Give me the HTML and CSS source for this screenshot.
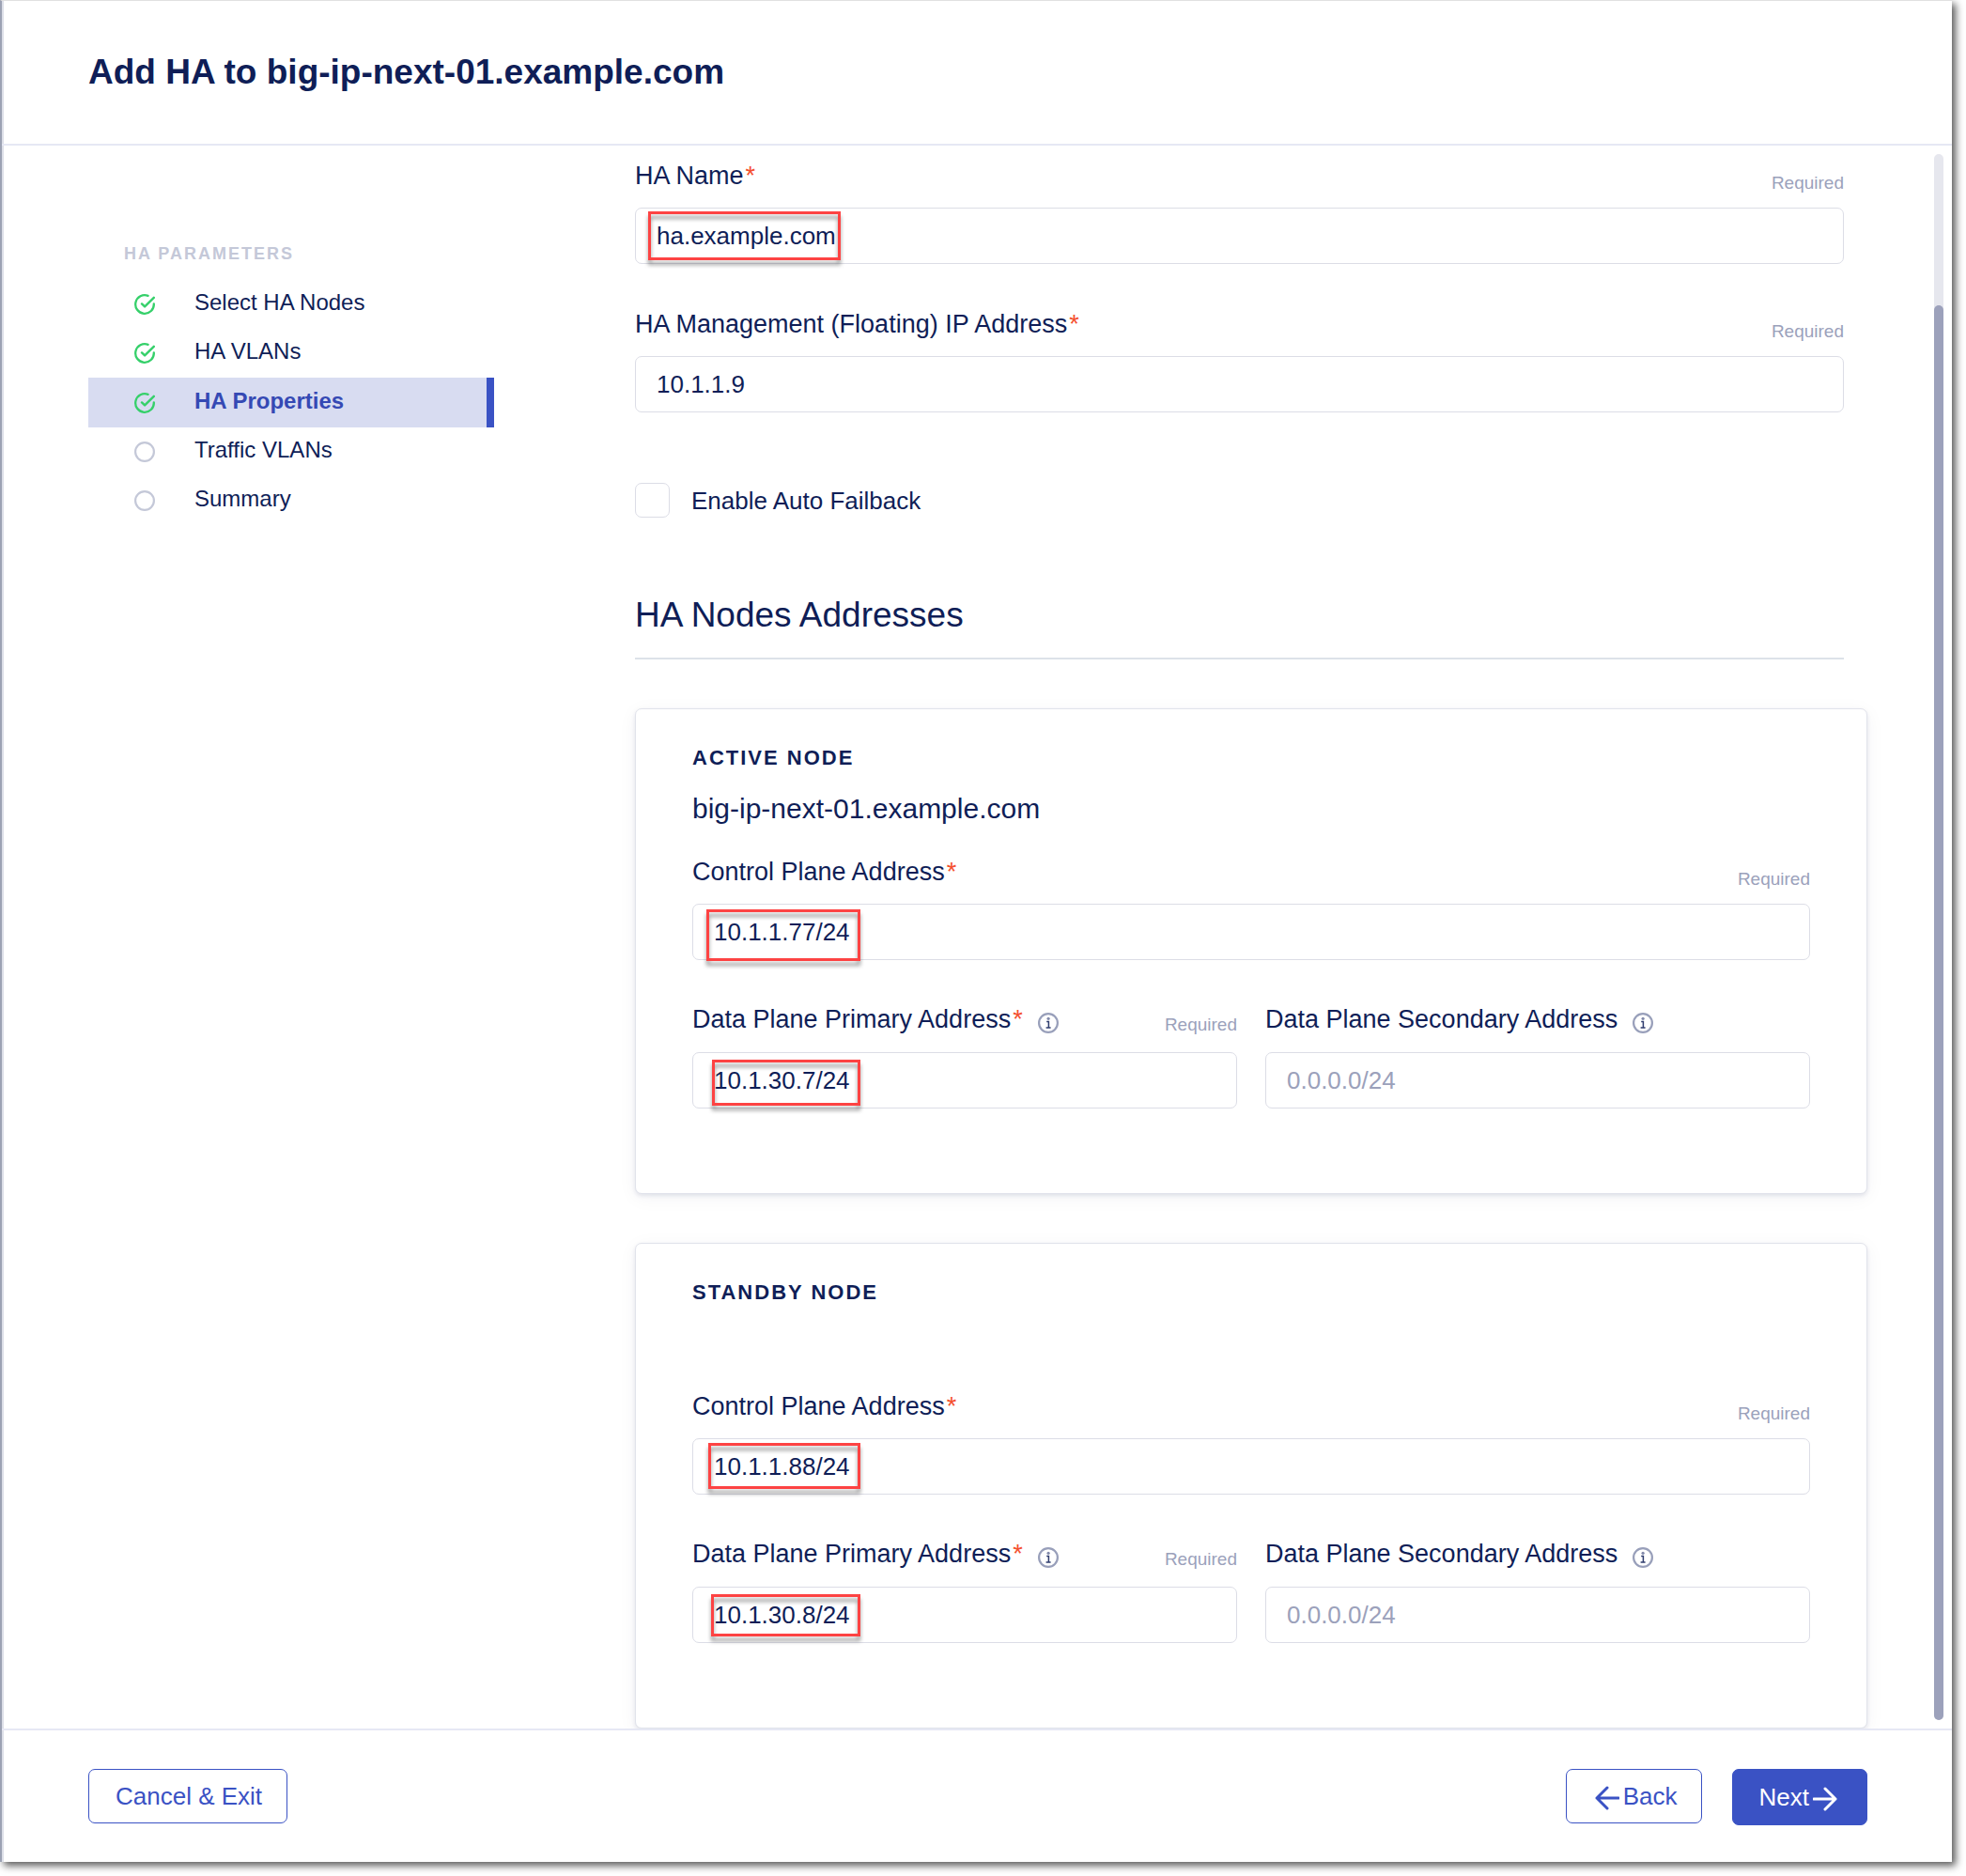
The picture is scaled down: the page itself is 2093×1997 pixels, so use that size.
FILE: index.html
```html
<!DOCTYPE html>
<html lang="en">
<head>
<meta charset="utf-8">
<meta name="viewport" content="width=device-width, initial-scale=1">
<title>Add HA to big-ip-next-01.example.com</title>
<link rel="stylesheet" href="styles.css">
</head>
<body>
<svg class="sprite" aria-hidden="true">
  <symbol id="icon-done" viewBox="0 0 22 22">
    <path d="M14.6 1.9A9.8 9.8 0 1 0 20.8 10.4" fill="none" stroke="currentColor" stroke-width="2.3" stroke-linecap="round"/>
    <path d="M8 10.4l3.1 3L20.8 3.8" fill="none" stroke="currentColor" stroke-width="2.4" stroke-linecap="round" stroke-linejoin="round"/>
  </symbol>
  <symbol id="icon-todo" viewBox="0 0 22 22">
    <circle cx="11" cy="11" r="9.9" fill="none" stroke="currentColor" stroke-width="2.2"/>
  </symbol>
  <symbol id="icon-info" viewBox="0 0 22 22">
    <circle cx="11" cy="11" r="9.9" fill="none" stroke="#989fba" stroke-width="2.2"/>
    <circle cx="11.1" cy="6.3" r="1.6" fill="#8189aa"/>
    <path d="M9.2 9.6h2.2v6.3M8.6 16h5" fill="none" stroke="#2f3c6e" stroke-width="1.5"/>
  </symbol>
</svg>

<div class="window">
  <header class="window-header">
    <h1>Add HA to big-ip-next-01.example.com</h1>
  </header>

  <div class="window-body">
    <nav class="steps" aria-label="HA parameters">
      <h2 class="steps-title">HA PARAMETERS</h2>
      <ol>
        <li><a class="step" href="#nodes"><svg class="step-icon done"><use href="#icon-done"/></svg>Select HA Nodes</a></li>
        <li><a class="step" href="#ha-vlans"><svg class="step-icon done"><use href="#icon-done"/></svg>HA VLANs</a></li>
        <li><a class="step current" href="#properties" aria-current="step"><svg class="step-icon done"><use href="#icon-done"/></svg>HA Properties</a></li>
        <li><a class="step" href="#traffic"><svg class="step-icon"><use href="#icon-todo"/></svg>Traffic VLANs</a></li>
        <li><a class="step" href="#summary"><svg class="step-icon"><use href="#icon-todo"/></svg>Summary</a></li>
      </ol>
    </nav>

    <main class="content">
      <form id="ha-form">
        <div class="general">
          <div class="field">
            <div class="field-head">
              <label for="ha-name">HA Name<span class="star">*</span></label>
              <span class="required">Required</span>
            </div>
            <div class="control">
              <input type="text" id="ha-name" value="ha.example.com">
              <span class="mark mark-name"></span>
            </div>
          </div>
          <div class="field">
            <div class="field-head">
              <label for="ha-ip">HA Management (Floating) IP Address<span class="star">*</span></label>
              <span class="required">Required</span>
            </div>
            <div class="control">
              <input type="text" id="ha-ip" value="10.1.1.9">
            </div>
          </div>
          <div class="check">
            <input type="checkbox" id="failback">
            <label for="failback">Enable Auto Failback</label>
          </div>
          <h2 class="section-title">HA Nodes Addresses</h2>
        </div>

        <section class="card">
          <h3>ACTIVE NODE</h3>
          <p class="node-name">big-ip-next-01.example.com</p>
          <div class="field">
            <div class="field-head">
              <label for="active-control">Control Plane Address<span class="star">*</span></label>
              <span class="required">Required</span>
            </div>
            <div class="control">
              <input type="text" id="active-control" value="10.1.1.77/24">
              <span class="mark mark-active-control"></span>
            </div>
          </div>
          <div class="pair">
            <div class="field">
              <div class="field-head with-info">
                <label for="active-primary">Data Plane Primary Address<span class="star">*</span></label>
                <button type="button" class="info" aria-label="About the primary address"><svg><use href="#icon-info"/></svg></button>
                <span class="required">Required</span>
              </div>
              <div class="control">
                <input type="text" id="active-primary" value="10.1.30.7/24">
                <span class="mark mark-active-primary"></span>
              </div>
            </div>
            <div class="field">
              <div class="field-head with-info">
                <label for="active-secondary">Data Plane Secondary Address</label>
                <button type="button" class="info" aria-label="About the secondary address"><svg><use href="#icon-info"/></svg></button>
              </div>
              <div class="control">
                <input type="text" id="active-secondary" placeholder="0.0.0.0/24">
              </div>
            </div>
          </div>
        </section>

        <section class="card">
          <h3>STANDBY NODE</h3>
          <p class="node-name"></p>
          <div class="field">
            <div class="field-head">
              <label for="standby-control">Control Plane Address<span class="star">*</span></label>
              <span class="required">Required</span>
            </div>
            <div class="control">
              <input type="text" id="standby-control" value="10.1.1.88/24">
              <span class="mark mark-standby-control"></span>
            </div>
          </div>
          <div class="pair">
            <div class="field">
              <div class="field-head with-info">
                <label for="standby-primary">Data Plane Primary Address<span class="star">*</span></label>
                <button type="button" class="info" aria-label="About the primary address"><svg><use href="#icon-info"/></svg></button>
                <span class="required">Required</span>
              </div>
              <div class="control">
                <input type="text" id="standby-primary" value="10.1.30.8/24">
                <span class="mark mark-standby-primary"></span>
              </div>
            </div>
            <div class="field">
              <div class="field-head with-info">
                <label for="standby-secondary">Data Plane Secondary Address</label>
                <button type="button" class="info" aria-label="About the secondary address"><svg><use href="#icon-info"/></svg></button>
              </div>
              <div class="control">
                <input type="text" id="standby-secondary" placeholder="0.0.0.0/24">
              </div>
            </div>
          </div>
        </section>
      </form>
    </main>

    <div class="scroll-track"><div class="scroll-thumb"></div></div>
  </div>

  <footer class="window-footer">
    <button type="button" class="btn cancel">Cancel &amp; Exit</button>
    <button type="button" class="btn back"><svg class="arrow" viewBox="0 0 26 26"><path d="M25 13H2M13 2L2 13l11 11"/></svg>Back</button>
    <button type="submit" form="ha-form" class="btn primary">Next<svg class="arrow" viewBox="0 0 26 26"><path d="M1 13h23M13 2l11 11-11 11"/></svg></button>
  </footer>
</div>
</body>
</html>
```

FILE: styles.css
```css
:root {
  --ink: #0f1e57;
  --blue: #3a52c4;
  --muted: #9ba1bb;
  --line: #dcdde6;
  --rule: #e6e8f4;
}

* {
  box-sizing: border-box;
}

body {
  margin: 0;
  background: #fff;
  color: var(--ink);
  font: 26px/32px "Liberation Sans", Arial, sans-serif;
}

h1, h2, h3, p, ol {
  margin: 0;
  padding: 0;
}

ol {
  list-style: none;
}

input, button {
  font: inherit;
  color: inherit;
}

.sprite {
  display: none;
}

.window {
  display: flex;
  flex-direction: column;
  min-height: calc(100vh - 15px);
  margin: 0 15px 15px 0;
  border-top: 1px solid #e0e0e0;
  border-left: 2px solid #9ca2b3;
  background: #fff;
  box-shadow: 4px 4px 8px rgba(0, 0, 0, 0.65), inset 2px 0 #dddfe8;
}

/* Header */

.window-header {
  display: flex;
  align-items: center;
  height: 154px;
  padding: 0 92px;
  border-bottom: 2px solid var(--rule);
}

.window-header h1 {
  font-size: 37px;
  line-height: 44px;
}

.window-body {
  display: flex;
  flex: 1;
  padding: 0 9px 0 92px;
}

/* Step list */

.steps {
  flex: none;
  width: 432px;
  padding-top: 101px;
}

.steps-title {
  padding: 0 38px;
  margin-bottom: 14px;
  color: #c4c8d8;
  font-size: 18px;
  line-height: 28px;
  letter-spacing: 2px;
}

.step {
  display: flex;
  align-items: center;
  gap: 42px;
  height: 52px;
  padding: 0 0 4px 49px;
  color: var(--ink);
  font-size: 24px;
  line-height: 28px;
  text-decoration: none;
}

.step.current {
  height: 53px;
  border-right: 8px solid var(--blue);
  background: #d8dcf1;
  color: #3549b4;
  font-weight: bold;
}

.step-icon {
  width: 22px;
  height: 22px;
  margin-top: 4px;
  color: #c4c8d8;
}

.step-icon.done {
  color: #35d06a;
}

/* Form */

.content {
  flex: 1;
  min-width: 0;
  padding: 16px 71px 0 150px;
}

.general {
  padding-right: 25px;
}

.field + .field {
  margin-top: 48px;
}

.pair {
  display: grid;
  grid-template-columns: 1fr 1fr;
  gap: 30px;
  margin-top: 47px;
}

.pair .field + .field {
  margin-top: 0;
}

.field-head {
  display: flex;
  align-items: flex-start;
  height: 38px;
  margin-bottom: 12px;
}

.field-head.with-info {
  height: 36px;
  margin-bottom: 15px;
}

.field-head label {
  font-size: 27px;
}

.star {
  margin-left: 2px;
  color: #f4502f;
}

.required {
  align-self: flex-end;
  margin-left: auto;
  color: var(--muted);
  font-size: 19px;
  line-height: 28px;
}

.info {
  width: 22px;
  height: 22px;
  margin: 9px 0 0 16px;
  padding: 0;
  border: 0;
  background: none;
}

.info svg {
  display: block;
  width: 22px;
  height: 22px;
}

.control {
  position: relative;
}

.control input {
  display: block;
  width: 100%;
  height: 60px;
  padding: 0 22px;
  border: 1px solid var(--line);
  border-radius: 7px;
  background: #fff;
}

.control input::placeholder {
  color: var(--muted);
  opacity: 1;
}

.check {
  display: flex;
  align-items: center;
  gap: 23px;
  margin-top: 75px;
}

.check input {
  appearance: none;
  width: 37px;
  height: 37px;
  margin: 0;
  border: 1px solid var(--line);
  border-radius: 7px;
  background: #fff;
}

.section-title {
  margin-top: 82px;
  padding-bottom: 23px;
  border-bottom: 2px solid #dde2e9;
  font-size: 37px;
  font-weight: normal;
  line-height: 44px;
}

.card {
  margin-top: 52px;
  padding: 38px 60px 90px;
  border: 1px solid #e1e3eb;
  border-radius: 7px;
  background: #fff;
  box-shadow: 0 2px 4px rgba(15, 30, 87, 0.1), 0 4px 20px rgba(15, 30, 87, 0.05);
}

.card h3 {
  font-size: 22px;
  line-height: 28px;
  letter-spacing: 2px;
}

.node-name {
  min-height: 36px;
  margin: 22px 0 33px;
  font-size: 30px;
  line-height: 36px;
}

/* Red frames that call out the values to enter */

.mark {
  position: absolute;
  border: 3px solid #fd4343;
  filter: drop-shadow(0 5px 2px rgba(0, 0, 0, 0.4));
  pointer-events: none;
}

.mark-name {
  top: 4px;
  left: 14px;
  width: 205px;
  height: 52px;
}

.mark-active-control {
  top: 6px;
  left: 15px;
  width: 164px;
  height: 55px;
}

.mark-active-primary {
  top: 8px;
  left: 21px;
  width: 158px;
  height: 49px;
}

.mark-standby-control {
  top: 5px;
  left: 17px;
  width: 162px;
  height: 49px;
}

.mark-standby-primary {
  top: 8px;
  left: 20px;
  width: 159px;
  height: 45px;
}

/* Scroll bar of the form */

.scroll-track {
  display: flex;
  flex: none;
  width: 10px;
  margin: 9px 0;
  padding-top: 161px;
  border-radius: 5px;
  background: #e6e7ee;
}

.scroll-thumb {
  flex: 1;
  border-radius: 5px;
  background: #9ca1bb;
}

/* Footer */

.window-footer {
  position: relative;
  display: flex;
  align-items: flex-start;
  height: 142px;
  padding: 41px 90px 0 92px;
  border-top: 2px solid var(--rule);
  background: #fff;
  box-shadow: inset 2px 0 #dddfe8;
}

.btn {
  display: flex;
  align-items: center;
  height: 58px;
  padding: 0 26px 0 28px;
  border: 1px solid var(--blue);
  border-radius: 7px;
  background: #fff;
  color: var(--blue);
}

.btn.cancel {
  margin-right: auto;
}

.btn.back {
  gap: 4px;
  margin-right: 32px;
  padding: 0 25px 0 30px;
}

.btn.primary {
  gap: 4px;
  height: 60px;
  padding: 0 31px 0 28px;
  background: var(--blue);
  color: #fff;
}

.arrow {
  width: 26px;
  height: 26px;
  margin-top: 4px;
  fill: none;
  stroke: currentColor;
  stroke-width: 3;
  stroke-linecap: round;
  stroke-linejoin: round;
}
```
